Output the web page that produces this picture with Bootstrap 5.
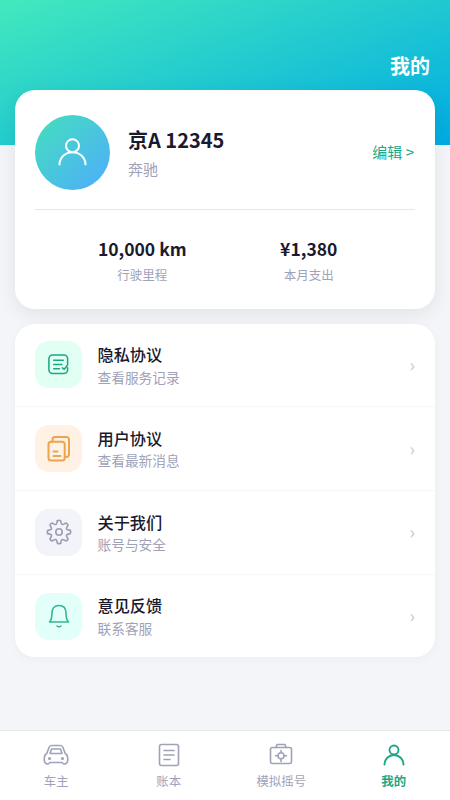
<!DOCTYPE html>
<html lang="zh-CN">
<head>
<meta charset="utf-8">
<meta name="viewport" content="width=device-width, initial-scale=1">
<title>我的</title>
<link href="https://cdn.jsdelivr.net/npm/bootstrap@5.3.0/dist/css/bootstrap.min.css" rel="stylesheet">
<style>
body{font-family:"Noto Sans CJK SC",sans-serif;background:#f4f5f9;color:#1a1a2e;height:800px;overflow:hidden}
svg{display:block;fill:none;stroke:currentColor;stroke-width:1.6;stroke-linecap:round;stroke-linejoin:round}
.hero{height:145px;padding:50px 20px 0;background:linear-gradient(160deg,#43e9bd 0%,#00abe3 100%)}
.hero h1{font-size:20px;line-height:31px}
.content{margin-top:-55px;padding:0 15px}
.panel{border-radius:20px;background:#fff}
.profile{height:219px;padding:25px 20px 0;box-shadow:0 5px 20px rgba(0,0,0,.08)}
.profile-top{height:95px;padding-bottom:20px;border-bottom:1px solid #e6e8eb}
.avatar{width:75px;height:75px;background:linear-gradient(135deg,#43e0bb,#4facfe);color:#fff}
.avatar svg{stroke-width:2}
.who{padding-left:18px}
.plate{font-size:20px;line-height:28px;padding-top:1px}
.brand{font-size:15px;line-height:22px;margin-top:4px}
.soft{color:#9fa2b8}
.accent{color:#1ba784}
.edit{font-size:15px;margin-right:1px}
.stats{padding:25px 23px 0 24px}
.stats .value{font-size:17.5px;line-height:28px}
.stats .name{font-size:12.5px;line-height:18px;margin-top:3px}
.menu{margin-top:14.5px;box-shadow:0 2px 10px rgba(0,0,0,.035)}
.menu-row{height:83.75px;padding:0 20px;border-bottom:1px solid #f7f7f9}
.menu-row:last-child{height:82.5px;border-bottom:0}
.tile{width:47px;height:47px;border-radius:14px}
.tile-mint{background:#e2fff3;color:#1ba784}
.tile-orange{background:#fff1e3;color:#eea44d}
.tile-orange svg{stroke-width:2}
.tile-gray{background:#f3f4f9;color:#9a9db0}
.tile-aqua{background:#e2fff9;color:#35b795}
.labels{padding:0 0 1px 15.5px}
.menu-title{font-size:16.2px;line-height:24px;font-weight:500}
.menu-text{font-size:13.7px;line-height:20px;margin-top:.5px}
.chev{color:#c7c8d0;font-size:18px;line-height:24px;padding-bottom:2px}
.tabs{height:70px;background:#fff;border-top:1px solid #e5e7ea}
.tab{font-size:12.4px;line-height:18px;padding-top:11px;gap:4px}
.tab.accent svg{stroke-width:1.9}
</style>
<script src="https://cdn.jsdelivr.net/npm/bootstrap@5.3.0/dist/js/bootstrap.bundle.min.js"></script>
</head>
<body class="d-flex flex-column">
<header class="hero flex-shrink-0 text-end text-white"><h1 class="m-0 fw-bold">我的</h1></header>
<main class="content flex-grow-1">
  <section class="panel profile">
    <div class="profile-top d-flex align-items-center">
      <div class="avatar rounded-circle d-flex align-items-center justify-content-center">
        <svg width="30" height="30" viewBox="0 0 30 30"><circle cx="14.500" cy="8.700" r="6.500"/><path d="M1.500 27.500a13 12.300 0 0 1 26 0"/></svg>
      </div>
      <div class="flex-grow-1 who">
        <div class="plate fw-bold">京A 12345</div>
        <div class="brand soft">奔驰</div>
      </div>
      <a href="#" class="edit accent text-decoration-none">编辑 &gt;</a>
    </div>
    <div class="stats row g-0 text-center">
      <div class="col-6"><div class="value fw-bold">10,000 km</div><div class="name soft">行驶里程</div></div>
      <div class="col-6"><div class="value fw-bold">¥1,380</div><div class="name soft">本月支出</div></div>
    </div>
  </section>
  <section class="panel menu">
    <a href="#" class="menu-row d-flex align-items-center text-reset text-decoration-none">
      <span class="tile tile-mint d-flex align-items-center justify-content-center"><svg width="23" height="23" viewBox="0 0 24 24"><path d="M21.500 11.500V6a4 4 0 0 0-4-4H6a4 4 0 0 0-4 4v11.500a4 4 0 0 0 4 4h11.500a4 4 0 0 0 4-4v-2M7 7.500h10M7 12h8.500M7 16.500h6M16 15.500l2 1.500 3.500-4.500"/></svg></span>
      <span class="flex-grow-1 labels"><span class="menu-title d-block">隐私协议</span><span class="menu-text soft d-block">查看服务记录</span></span>
      <span class="chev">›</span>
    </a>
    <a href="#" class="menu-row d-flex align-items-center text-reset text-decoration-none">
      <span class="tile tile-orange d-flex align-items-center justify-content-center"><svg width="26" height="26" viewBox="0 0 26 26"><path d="M6.500 6V3.500a2.500 2.500 0 0 1 2.500-2.500h11.500a2.500 2.500 0 0 1 2.500 2.500v15a2.500 2.500 0 0 1-2.500 2.500H19"/><rect x="2.500" y="5.700" width="16.200" height="18.800" rx="2.500"/><path d="M7.500 15.500h4M7.500 20h7"/></svg></span>
      <span class="flex-grow-1 labels"><span class="menu-title d-block">用户协议</span><span class="menu-text soft d-block">查看最新消息</span></span>
      <span class="chev">›</span>
    </a>
    <a href="#" class="menu-row d-flex align-items-center text-reset text-decoration-none">
      <span class="tile tile-gray d-flex align-items-center justify-content-center"><svg width="26" height="26" viewBox="-13 -13 26 26"><circle r="3.200"/><path id="tooth" d="M-1.600-11.200Q0-12.200 1.600-11.200C2.200-8.600 2.200-7.900 3.100-7.500C4.030-7.140 4.530-7.640 6.790-9.050Q8.630-8.630 9.050-6.790C7.640-4.530 7.140-4.030 7.500-3.100C7.900-2.200 8.600-2.200 11.200-1.600"/><use href="#tooth" transform="rotate(90)"/><use href="#tooth" transform="rotate(180)"/><use href="#tooth" transform="rotate(270)"/></svg></span>
      <span class="flex-grow-1 labels"><span class="menu-title d-block">关于我们</span><span class="menu-text soft d-block">账号与安全</span></span>
      <span class="chev">›</span>
    </a>
    <a href="#" class="menu-row d-flex align-items-center text-reset text-decoration-none">
      <span class="tile tile-aqua d-flex align-items-center justify-content-center"><svg width="24" height="26" viewBox="0 0 24 26"><path d="M2.500 19C4.500 17 5 14.500 5 10 5 5.500 7.500 2.500 12 2.500s7 3 7 7.500c0 4.500.5 7 2.500 9zM10 23q2 1.800 4 0"/></svg></span>
      <span class="flex-grow-1 labels"><span class="menu-title d-block">意见反馈</span><span class="menu-text soft d-block">联系客服</span></span>
      <span class="chev">›</span>
    </a>
  </section>
</main>
<nav class="tabs d-flex flex-shrink-0">
  <a href="#" class="tab soft col-3 d-flex flex-column align-items-center text-decoration-none"><svg width="26" height="26" viewBox="0 0 26 26"><path d="M4 11 6 5.500Q6.700 3.500 9 3.500h8q2.300 0 3 2L22 11q2.700 2 2.700 5v3q0 1.300-1.500 2.300-1.200 1-2.400.7L19 20.500H7L5.200 22q-1.200.3-2.400-.7-1.500-1-1.500-2.300v-3q0-3 2.700-5zM8.500 7h9l1.500 4.500H7z"/><circle cx="6.500" cy="16.500" r=".8"/><circle cx="19.500" cy="16.500" r=".8"/></svg><span>车主</span></a>
  <a href="#" class="tab soft col-3 d-flex flex-column align-items-center text-decoration-none"><svg width="26" height="26" viewBox="0 0 26 26"><rect x="3.500" y="2.500" width="19" height="21" rx="2"/><path d="M8 8.500h10M8 13h10M8 17.500h6"/></svg><span>账本</span></a>
  <a href="#" class="tab soft col-3 d-flex flex-column align-items-center text-decoration-none"><svg width="26" height="26" viewBox="0 0 26 26"><rect x="2.500" y="5.500" width="21" height="16" rx="2"/><path d="M8 5.500 9 2.500h8l1 3M13 8.500v2M13 17v2.500M7.500 13.700h2.500M16 13.700H18.500"/><circle cx="13" cy="13.700" r="3"/></svg><span>模拟摇号</span></a>
  <a href="#" class="tab accent col-3 d-flex flex-column align-items-center text-decoration-none"><svg width="26" height="26" viewBox="0 0 26 26"><circle cx="13" cy="8" r="4.500"/><path d="M3.500 22.500a9.500 9.500 0 0 1 19 0"/></svg><span class="fw-bold">我的</span></a>
</nav>
</body>
</html>
